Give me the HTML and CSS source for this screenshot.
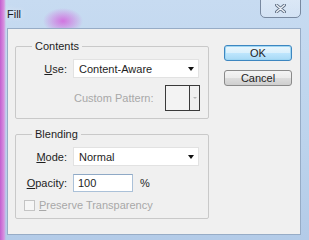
FILE: index.html
```html
<!DOCTYPE html>
<html lang="en">
<head>
    <meta charset="UTF-8">
    <title>Fill</title>
    <link rel="stylesheet" href="styles.css">
</head>
<body>
    <div class="window">
        <div class="titlebar">
            <span class="title">Fill</span>
            <button class="close" aria-label="Close">
                <svg width="11" height="9" viewBox="0 0 11 9">
                    <path d="M1.5 1 L9.5 8 M9.5 1 L1.5 8" stroke="#5b6b80" stroke-width="3" stroke-linecap="round"/>
                    <path d="M1.5 1 L9.5 8 M9.5 1 L1.5 8" stroke="#eef2f7" stroke-width="1.4" stroke-linecap="round"/>
                </svg>
            </button>
        </div>

        <div class="client">
            <div class="groups">
                <fieldset class="group contents">
                    <legend>Contents</legend>
                    <div class="row first">
                        <label class="label"><u>U</u>se:</label>
                        <div class="select">Content-Aware<span class="arrow"></span></div>
                    </div>
                    <div class="row pattern-row">
                        <span class="disabled">Custom Pattern:</span>
                        <div class="pattern"><span class="swatch"></span><span class="drop"><span class="mini-arrow"></span></span></div>
                    </div>
                </fieldset>

                <fieldset class="group blending">
                    <legend>Blending</legend>
                    <div class="row first">
                        <label class="label"><u>M</u>ode:</label>
                        <div class="select">Normal<span class="arrow"></span></div>
                    </div>
                    <div class="row opacity-row">
                        <label class="label"><u>O</u>pacity:</label>
                        <div class="input">100</div>
                        <span class="unit">%</span>
                    </div>
                    <div class="row check-row">
                        <span class="checkbox"></span>
                        <span class="disabled"><u>P</u>reserve Transparency</span>
                    </div>
                </fieldset>
            </div>

            <div class="buttons">
                <button class="btn default">OK</button>
                <button class="btn">Cancel</button>
            </div>
        </div>
    </div>
</body>
</html>
```

FILE: styles.css
```css
body {
    margin: 0;
    font-family: "Liberation Sans", Arial, sans-serif;
    font-size: 11px;
    color: #1e1e1e;
}

.window {
    width: 309px;
    height: 240px;
    display: flex;
    flex-direction: column;
    box-sizing: border-box;
    padding: 0 8px 5px 7px;
    background:
        radial-gradient(ellipse 20px 13px at 63px 21px, rgba(212, 92, 220, 0.8), rgba(212, 92, 220, 0) 100%),
        linear-gradient(90deg, #c25fcf 0px, #d891e0 4px, rgba(190, 210, 236, 0) 6px),
        linear-gradient(180deg, #c7dbf1 0%, #bcd3ec 60%, #b3cbe8 100%);
}

.titlebar {
    height: 28px;
    display: flex;
    align-items: flex-start;
    justify-content: space-between;
}

.title {
    margin-top: 8px;
    color: #1a1a1a;
    font-size: 11px;
    text-shadow: 0 0 6px #ffffff;
}

.close {
    width: 41px;
    height: 19px;
    margin: -1px 0 0 0;
    padding: 0;
    border: 1px solid #7889a0;
    border-radius: 0 0 5px 5px;
    background: linear-gradient(180deg, rgba(255, 255, 255, 0.35), rgba(220, 232, 246, 0.6));
    display: flex;
    align-items: center;
    justify-content: center;
}

.client {
    flex: 1;
    display: flex;
    background: #f0f0f0;
    border: 1px solid #97acc6;
}

.groups {
    width: 201px;
}

.group {
    margin: 10px 0 0 7px;
    width: 194px;
    box-sizing: border-box;
    padding: 0;
    border: 1px solid #c9c9c9;
    border-radius: 2px;
}

.group legend {
    margin-left: 16px;
    padding: 0 3px;
    line-height: 15px;
}

.group.contents {
    height: 80px;
}

.group.blending {
    margin-top: 8px;
    height: 92px;
}

.row {
    display: flex;
    align-items: center;
}

.label {
    width: 51px;
    text-align: right;
    margin-right: 6px;
}

.row.first {
    margin-top: 5px;
}

.select {
    position: relative;
    width: 126px;
    height: 19px;
    box-sizing: border-box;
    background: #ffffff;
    border: 1px solid #e2e2e2;
    padding-left: 5px;
    display: flex;
    align-items: center;
}

.arrow {
    position: absolute;
    right: 4px;
    top: 7px;
    border-left: 3px solid transparent;
    border-right: 3px solid transparent;
    border-top: 4px solid #111111;
}

.pattern-row {
    margin: 7px 0 0 58px;
    width: 126px;
    justify-content: space-between;
}

.disabled {
    color: #a8a8a8;
}

.pattern {
    width: 35px;
    height: 26px;
    box-sizing: border-box;
    border: 1px solid #3a3a3a;
    display: flex;
}

.swatch {
    width: 23px;
    border-right: 1px solid #3a3a3a;
    background: #f3f3f3;
}

.drop {
    flex: 1;
    display: flex;
    align-items: center;
    justify-content: center;
}

.mini-arrow {
    border-left: 2px solid transparent;
    border-right: 2px solid transparent;
    border-top: 2px solid #b8b8b8;
}

.opacity-row {
    margin-top: 8px;
}

.input {
    width: 60px;
    height: 18px;
    box-sizing: border-box;
    background: #ffffff;
    border: 1px solid #abc1d8;
    border-top-color: #8fa9c6;
    padding-left: 4px;
    display: flex;
    align-items: center;
}

.unit {
    margin-left: 7px;
}

.check-row {
    margin: 7px 0 0 8px;
}

.checkbox {
    width: 11px;
    height: 11px;
    box-sizing: border-box;
    border: 1px solid #c4c4c4;
    background: #f6f6f6;
    margin-right: 4px;
}

.buttons {
    margin: 16px 0 0 15px;
    width: 68px;
    display: flex;
    flex-direction: column;
    gap: 9px;
}

.btn {
    height: 16px;
    padding: 0;
    font-family: inherit;
    font-size: 11px;
    color: #1e1e1e;
    border: 1px solid #8a8a8a;
    border-radius: 3px;
    background: linear-gradient(180deg, #f4f4f4 0%, #ebebeb 50%, #dddddd 51%, #cfcfcf 100%);
}

.btn.default {
    border-color: #3d86c0;
    box-shadow: inset 0 0 0 1px #9fd6f3;
    background: linear-gradient(180deg, #eaf6fd 0%, #d9f0fc 50%, #bee6fd 51%, #a7d9f5 100%);
}
```
